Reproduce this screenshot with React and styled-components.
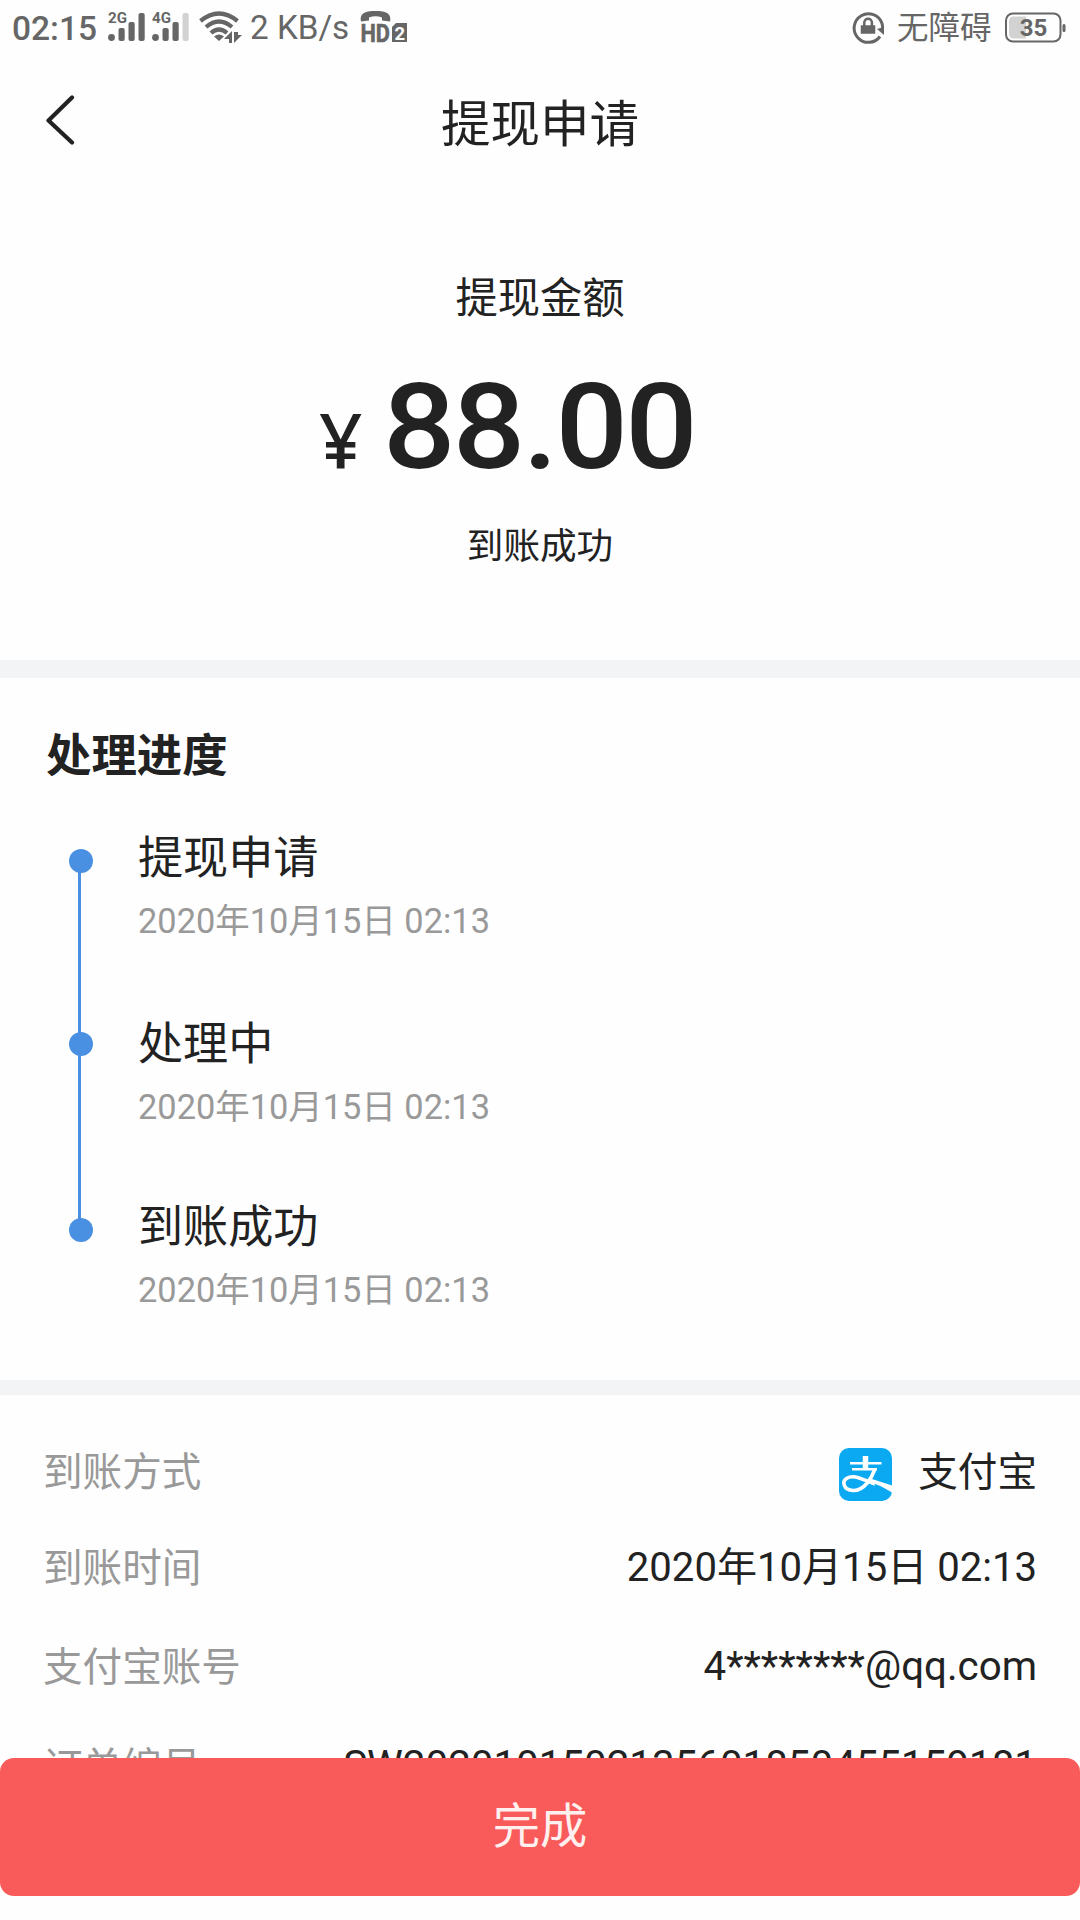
import React from 'react';
import styled, { createGlobalStyle } from 'styled-components';

const GlobalStyle = createGlobalStyle`
  * { box-sizing: border-box; }
  body { margin: 0; background: #fefefe; font-family: Roboto, "Noto Sans CJK SC", sans-serif; color: #222; }
`;
const Screen = styled.div`
  width: 1080px; height: 1920px; overflow: hidden; position: relative;
  display: flex; flex-direction: column;
`;
const StatusBar = styled.header`
  height: 56px; padding: 0 14px 0 12px; flex: none;
  display: flex; align-items: center; justify-content: space-between; color: #666;
`;
const StatusGroup = styled.div`display: flex; align-items: center; height: 56px;`;
const StatusText = styled.span`
  font-size: ${p => p.$size}px; font-weight: ${p => p.$weight || 400}; line-height: 56px;
  margin-left: ${p => p.$gap || 0}px; padding-top: ${p => p.$drop || 0}px;
  width: ${p => p.$width}px; white-space: nowrap;
`;
const StatusIcon = styled.svg`
  display: block; flex: none; margin-left: ${p => p.$gap || 0}px;
  text { font-family: Roboto, sans-serif; font-weight: 700; }
`;
const NavBar = styled.nav`
  height: 130px; padding: 0 44px; flex: none;
  display: grid; grid-template-columns: 40px 1fr 40px; align-items: center;
`;
const NavTitle = styled.h1`
  margin: 0; padding-top: 8px; text-align: center; font-size: 49.5px; font-weight: 400; line-height: 122px;
`;
const Summary = styled.section`
  height: 474px; padding-top: 82px; flex: none;
  display: flex; flex-direction: column; align-items: center;
`;
const SummaryText = styled.p`
  margin: 0; font-size: ${p => p.$size}px; line-height: ${p => p.$line}px;
`;
const Amount = styled.div`
  display: flex; align-items: baseline; align-self: flex-start; margin: 10px 0 4px 319px;
  height: 176px; line-height: 176px; font-weight: 500;
`;
const Currency = styled.span`font-family: "Noto Sans", sans-serif; font-size: 76px; width: 64px;`;
const Figure = styled.span`
  font-size: 118px; letter-spacing: -2.4px; transform: scaleX(1.08); transform-origin: left center;
`;
const Divider = styled.div`height: ${p => p.$height}px; background: #f3f4f6; flex: none;`;
const Progress = styled.section`height: 702px; padding: 46px 46px 0; flex: none;`;
const SectionTitle = styled.h2`margin: 0; font-size: 45.4px; line-height: 66px; font-weight: 700;`;
const Steps = styled.ol`margin: 32px 0 0; padding: 0 0 0 23px; list-style: none;`;
const Step = styled.li`
  display: grid; grid-template-columns: 24px 1fr; column-gap: 45px; height: ${p => p.$height}px;
`;
const Track = styled.div`display: flex; flex-direction: column; padding-top: 27px;`;
const Dot = styled.i`width: 24px; height: 24px; border-radius: 50%; background: #4a90e2; flex: none;`;
const Line = styled.i`width: 3px; flex: 1; margin: -1px 0 -28px 9px; background: #4a90e2;`;
const StepBody = styled.div`padding-top: ${p => p.$offset || 0}px;`;
const StepTitle = styled.div`font-size: 45.1px; line-height: 66px;`;
const StepDate = styled.div`font-size: 34.4px; line-height: 50px; margin-top: 4px; color: #999;`;
const Details = styled.section`padding: 43px 43px 0; flex: none;`;
const Row = styled.div`
  height: ${p => p.$height}px; display: flex; justify-content: space-between;
  font-size: 39.6px; line-height: 66px;
`;
const Label = styled.span`color: #999; padding-top: ${p => p.$drop || 2}px;`;
const Value = styled.span`
  display: flex; align-items: flex-start; white-space: nowrap; font-size: ${p => p.$size || 40.3}px;
  padding-top: ${p => p.$drop || 0}px;
`;
const Logo = styled.svg`margin: 8px 26px 0 0; display: block;`;
const DoneButton = styled.button`
  position: absolute; left: 0; right: 0; top: 1758px; height: 138px; width: 100%;
  border: 0; border-radius: 14px; background: #f95a5a; color: #fff0f0;
  font: 400 47.3px/134px Roboto, "Noto Sans CJK SC", sans-serif; padding: 0;
`;

const steps = [
  { title: '提现申请', height: 183, offset: 4 },
  { title: '处理中', height: 186, offset: 7 },
  { title: '到账成功', height: 160, offset: 4 },
];

const Signal = ({ label, dim }) => (
  <StatusIcon $gap={dim ? 7 : 11} width="37" height="44" viewBox="0 0 37 44" fill="#666">
    <text x="0" y="17" fontSize="15.5" textLength="19" lengthAdjust="spacingAndGlyphs">{label}</text>
    <circle cx="3.500" cy="31.500" r="3.400" />
    <rect x="10.500" y="22" width="6.200" height="13" rx="2" />
    <rect x="20.500" y="16" width="6.200" height="19" rx="2" />
    <rect x="30.500" y="7" width="6.200" height="28" rx="2" fill={dim ? '#d2d2d2' : '#666'} />
  </StatusIcon>
);
const Wifi = () => (
  <StatusIcon $gap={10} width="43" height="40" viewBox="0 0 43 40" fill="none" stroke="#666" strokeWidth="4.200">
    <path d="M1.500 13Q20-2 38.500 13" />
    <path d="M7 19Q20 8 33 19" />
    <path d="M12 25Q20 18 28 25" />
    <path d="M15 28.500Q20 24.500 25 28.500L20 33Z" fill="#666" stroke="none" />
    <path d="M33 23V35H30V31H25ZM35 24V35L43 27H39V24Z" fill="#666" stroke="none" />
  </StatusIcon>
);
const HdCall = () => (
  <StatusIcon $gap={9} width="48" height="40" viewBox="0 0 48 40" fill="#666">
    <path d="M1 13.500C-1 5 6 3 15.500 3S32 5 30 13.500L22 12.500V9.500Q15.500 7 9 9.500V12.500Z" />
    <text x="0.500" y="34" fontSize="26.500" stroke="#666" strokeWidth="0.600" textLength="29.500" lengthAdjust="spacingAndGlyphs">HD</text>
    <path d="M36 15H47V34H32V19Z" />
    <text x="34.500" y="31.500" fontSize="18.500" fill="#fefefe">2</text>
  </StatusIcon>
);
const RotationLock = () => (
  <StatusIcon width="34" height="34" viewBox="0 0 34 34" fill="none" stroke="#666" strokeWidth="3">
    <path d="M28 25.500A14.300 14.300 0 1 1 30 12.500Q30.800 15 30.500 18" />
    <path d="M25 18L32 16V24Z" fill="#666" stroke="none" />
    <rect x="9.500" y="15" width="13" height="7" fill="#666" stroke="#666" strokeWidth="1.500" />
    <path d="M12.300 15V11.500A3.800 3.800 0 0 1 19.900 11.500V15" strokeWidth="2.500" />
  </StatusIcon>
);
const Battery = () => (
  <StatusIcon $gap={13} width="61" height="32" viewBox="0 0 61 32">
    <rect x="1" y="1.500" width="54.500" height="28" rx="7" fill="none" stroke="#666" strokeWidth="2" />
    <path d="M9 4.500H21V26.500H9Q4 26.500 4 21.500V9.500Q4 4.500 9 4.500Z" fill="#d2d2d2" />
    <rect x="57.500" y="12" width="3" height="8" rx="1.500" fill="#666" />
    <text x="28.500" y="24" fontSize="24" textAnchor="middle" fill="#666">35</text>
  </StatusIcon>
);
const AlipayLogo = () => (
  <Logo width="53" height="53" viewBox="0 0 53 53">
    <rect width="53" height="53" rx="10" fill="#0aa9f2" />
    <path d="M29 33.500Q39 36 53 44.500V37.500L33 31Z" fill="#fff" />
    <g fill="none" stroke="#fff">
      <path d="M11 15.200H42.500M13 21.200H38" strokeWidth="2.600" />
      <path d="M26.500 8V22" strokeWidth="5.500" />
      <path d="M36 20.500C33 30 25 43 14 42.500C4 42 3 33.500 7.500 30.500C15 25.500 24 32 36 36" strokeWidth="3.600" />
    </g>
  </Logo>
);

export default function App() {
  return (
    <Screen>
      <GlobalStyle />
      <StatusBar>
        <StatusGroup>
          <StatusText $size={33.5} $weight={500} $width={85} $drop={1}>02:15</StatusText>
          <Signal label="2G" />
          <Signal label="4G" dim />
          <Wifi />
          <StatusText $size={33.2} $gap={8} $width={101}>2 KB/s</StatusText>
          <HdCall />
        </StatusGroup>
        <StatusGroup>
          <RotationLock />
          <StatusText $size={31.5} $gap={11} $width={95} $drop={1}>无障碍</StatusText>
          <Battery />
        </StatusGroup>
      </StatusBar>
      <NavBar>
        <svg width="34" height="52" viewBox="0 0 34 52" fill="none" stroke="#222" strokeWidth="4.200" strokeLinecap="round" strokeLinejoin="round">
          <path d="M28 2.500L4.500 25.500L28 47.500" />
        </svg>
        <NavTitle>提现申请</NavTitle>
      </NavBar>
      <Summary>
        <SummaryText $size={42.3} $line={62}>提现金额</SummaryText>
        <Amount><Currency>¥</Currency><Figure>88.00</Figure></Amount>
        <SummaryText $size={36.6} $line={54}>到账成功</SummaryText>
      </Summary>
      <Divider $height={18} />
      <Progress>
        <SectionTitle>处理进度</SectionTitle>
        <Steps>
          {steps.map((s, i) => (
            <Step key={s.title} $height={s.height}>
              <Track><Dot />{i < steps.length - 1 && <Line />}</Track>
              <StepBody $offset={s.offset}>
                <StepTitle>{s.title}</StepTitle>
                <StepDate>2020年10月15日 02:13</StepDate>
              </StepBody>
            </Step>
          ))}
        </Steps>
      </Progress>
      <Divider $height={15} />
      <Details>
        <Row $height={96}><Label>到账方式</Label><Value $size={39.6} $drop={2}><AlipayLogo />支付宝</Value></Row>
        <Row $height={99}><Label>到账时间</Label><Value $size={40.1} $drop={1}>2020年10月15日 02:13</Value></Row>
        <Row $height={99}><Label>支付宝账号</Label><Value $drop={1}>4********@qq.com</Value></Row>
        <Row $height={66}><Label $drop={3}>订单编号</Label><Value $drop={1}>SW2020101502135601850455159181</Value></Row>
      </Details>
      <DoneButton>完成</DoneButton>
    </Screen>
  );
}
